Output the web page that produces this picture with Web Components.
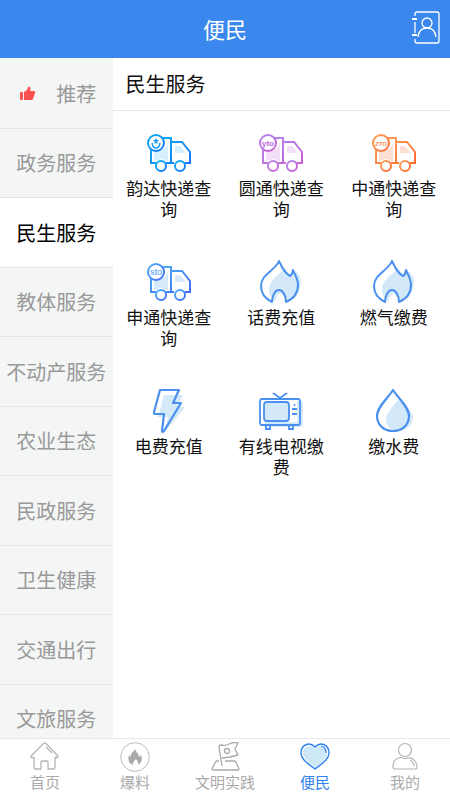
<!DOCTYPE html>
<html lang="zh-CN">
<head>
<meta charset="utf-8">
<meta name="viewport" content="width=device-width,initial-scale=1">
<title>便民</title>
<style>
html,body{margin:0;height:100%}
body{font-family:"Noto Sans CJK SC","Liberation Sans",sans-serif;font-weight:400;background:#fff;color:#111;overflow:hidden}
</style>
</head>
<body>
<service-app></service-app>
<script>
const truck = (id, a, b, pale, mark) => `
<defs><linearGradient id="${id}" x1="0" y1="0" x2="1" y2="1"><stop offset="0" stop-color="${a}"/><stop offset="1" stop-color="${b}"/></linearGradient></defs>
<path d="M8 17h6q7-1 8-8v19h-3q-4-4-9 0H8z" fill="${pale}"/><path d="M29 13h5l6 7H29z" fill="${pale}"/>
<g fill="none" stroke="url(#${id})" stroke-width="2"><path d="M10 30H5V5h20v25h-5M25 9h11l8 10v11h-5M25 30h3"/><circle cx="15" cy="33" r="5" fill="#fff"/><circle cx="34" cy="33" r="5" fill="#fff"/><circle cx="10" cy="10" r="8" fill="#fff"/></g>${mark}`;
const word = (t, c, s, size, w) => `<text x="10" y="13" font-size="${size}" font-weight="${w}" font-family="Liberation Sans, sans-serif" font-style="${s}" text-anchor="middle" fill="${c}">${t}</text>`;
const flame = `<path d="M27 6C20 14 11 18 11 28c0 5 3 9 6 12q4-17 12 0c10-3 14-12 14-20 0-6-3-9-7-12l-4 6z" fill="#d3e8f8"/>
<path d="M21-1C17 9 3 12 3 24c0 8 5 13 11 16 0-6 3-12 7-12s7 6 7 12c7-3 12-9 12-17 0-6-3-10-5-15-.5 3-1 5-3 6-6-3-8-9-11-15z" fill="none" stroke="#4a90ee" stroke-width="2" stroke-linejoin="round"/>`;
const ICONS = {
yunda: truck('g','#12b4f2','#1676fa','#d5f1fd','<path d="M6 10q1 5 4 5t4-5" fill="none" stroke="#189cf5" stroke-width="1.4"/><path d="M10 5l1 2h2l-2 2 1 2-2-1-2 1 1-2-2-2h2z" fill="#189cf5"/>'),
yto: truck('g','#b18aed','#cb5fd4','#f3dff8',word('yto','#b96bdf','normal',8,700)),
zto: truck('g','#fba660','#ff6a2e','#fde0d3',word('ZTO','#fb8b4c','italic',6,700)),
sto: truck('g','#4eb5f7','#4169f3','#d5e9fb',word('sto','#4499f4','normal',9,400)),
flame,
bolt: `<path d="M18 4h19l-6 12h8L19 41l3-15H12z" fill="#d3e8f8"/><path d="M14-1h19l-6 13h8L18 40q-2 2-2 0l2-17H9q-1 0-1-2z" fill="none" stroke="#4a90ee" stroke-width="2.2" stroke-linejoin="round"/>`,
tv: `<rect x="7" y="10" width="38" height="26" rx="2" fill="#d3e8f8"/><path d="M3 9h36v22H3z" fill="#fff"/><g fill="none" stroke="#4a90ee" stroke-width="1.8"><rect x="2" y="8" width="40" height="26" rx="2"/><rect x="6" y="11" width="25" height="19" rx="3" fill="#d3e8f8"/><path d="M15 2l7 5 7-5M8 34v4h4v-4M31 34v4h4v-4M34 18h5M34 23h5"/></g><circle cx="36.5" cy="14" r="1" fill="#4a90ee"/>`,
drop: `<path d="M27 9C21 17 15 22 15 29c0 6 6 11 12 11 8 0 15-6 15-14 0-5-7-12-15-17z" fill="#d3e8f8"/><path d="M22-1C17 7 6 16 6 25c0 9 7 15 16 15s16-6 16-15C38 16 27 7 22-1z" fill="none" stroke="#4a90ee" stroke-width="2.2" stroke-linejoin="round"/>`,
thumb: `<g fill="#f9514f"><rect x="0" y="6" width="3" height="8" rx="1"/><path d="M4 6l3-2 1-3q1-1 2 0 1 2 0 4h4q2 0 1 2l-2 6q0 1-2 1H4z"/></g>`,
contact: `<g fill="none" stroke="#fff" stroke-width="1.3"><path d="M3 5V3q0-2 2-2h20q2 0 2 2v27q0 2-2 2H5q-2 0-2-2v-2M3 11v11"/><path d="M0 8h5M0 24h5" stroke-width="2.2"/><circle cx="15" cy="12" r="5"/><path d="M6 26q1-9 9-9t9 9" /></g>`,
home: `<g fill="none" stroke="#b5b5b5" stroke-width="1.3" stroke-linejoin="round"><path d="M17 2.500Q15 0 13 2L2 13q-2 2 0 2.500h2V25q0 2 2 2h5v-7q0-1 1-1h5q1 0 1 1v7h5q2 0 2-2v-9.500h2q2-.5 0-2.500z"/><path d="M16 5l6 6"/></g>`,
fire: `<circle cx="15" cy="15" r="14.3" fill="none" stroke="#bcbcbc"/><path d="M15 7c1 4 4 4 4 8l2-2c2 5 0 8-3 10q1-3-2-6-4 3-3 6c-5-2-5-6-4-10l2 2c-1-4 3-5 4-8z" fill="#a9a9a9"/>`,
flag: `<g fill="none" stroke="#aaa" stroke-width="1.3" stroke-linejoin="round"><path d="M12 24L9 5q0-2 2-2 5 1 8-1t9-1l-3 6 3 6-8 2-8 1"/><circle cx="17" cy="9" r="2.5"/><path d="M9 19H7q-1 0-2 2l-3 6q0 1 1 1h25q1 0 1-1l-3-7q-1-1-2-1h-9"/></g>`,
heart: `<path d="M15 5C9-1 1 3 1 11c0 7 8 11 14 16 6-5 14-9 14-16C29 3 21-1 15 5z" fill="#fff" stroke="#2f83f0" stroke-width="1.4"/><path d="M15 8C10 2 4 6 4 11c0 6 7 9 11 13 5-4 11-7 11-13 0-5-6-9-11-3z" fill="#cde8f7" stroke="#cde8f7" stroke-width="2"/><path d="M21 4q5 1 5 7" fill="none" stroke="#2f83f0" stroke-width="1.2"/>`,
person: `<g fill="none" stroke="#b5b5b5" stroke-width="1.2"><circle cx="15" cy="8" r="6.5"/><path d="M8 16q3-1 5 0 2 1 5 0 4-1 7 3 2 3 2 6 0 2-2 2H5q-2 0-2-2 0-7 5-9zM20 18q4 2 4 6"/></g>`
};
function define(name, render){
  customElements.define(name, class extends HTMLElement{
    connectedCallback(){
      if(this.shadowRoot) return;
      this.attachShadow({mode:'open'}).innerHTML = render(this);
    }
  });
}
define('app-icon', el => `<style>:host{display:block}svg{display:block;overflow:visible;width:100%;height:100%}</style>
<svg viewBox="${el.getAttribute('box')}" aria-hidden="true">${ICONS[el.getAttribute('name')]}</svg>`);

define('top-bar', () => `<style>
:host{display:grid;grid-template-columns:1fr auto 1fr;align-items:center;box-sizing:border-box;height:58px;padding-bottom:3px;flex:none;background:#3a88ed;color:#fff}
h1{grid-column:2;margin:0;font-size:22px;line-height:32px;font-weight:400}
button{justify-self:end;margin:0 10px 0 0;padding:0;border:0;background:none;color:inherit}
app-icon{width:28px;height:34px}
</style><h1><slot></slot></h1><button type="button" aria-label="通讯录"><app-icon name="contact" box="0 0 28 34"></app-icon></button>`);

define('category-item', el => `<style>
:host{display:block;height:70px;box-sizing:border-box;border-bottom:1px solid #e4e6e6;background:#f4f6f6;color:#999}
:host(:nth-child(even)){height:69px}
:host([active]){background:#fff;color:#000}
button{display:flex;width:100%;height:100%;align-items:center;justify-content:center;gap:20px;padding:0;border:0;background:none;color:inherit;font:inherit;font-size:20px;line-height:28px;white-space:nowrap}
:host([icon]) button{padding-left:4px}
app-icon{width:16px;height:16px}
</style><button type="button" ${el.hasAttribute('active')?'aria-current="true"':''}>${el.hasAttribute('icon')?'<app-icon name="thumb" box="0 0 16 16"></app-icon>':''}<span><slot></slot></span></button>`);

define('category-list', () => `<style>:host{display:block;flex:0 0 25%;min-height:0;padding-top:1px;overflow:hidden;background:#f4f6f6}</style><slot></slot>`);

define('service-tile', el => `<style>
:host{display:block}
a{display:flex;flex-direction:column;align-items:center;padding:20px 12px 21px;color:#111;text-decoration:none;text-align:center;font-size:17px;line-height:21px}
app-icon{width:46px;height:46px}
</style><a href="#${el.getAttribute('icon')}"><app-icon name="${el.getAttribute('icon')}" box="0 -2 46 46"></app-icon><span><slot></slot></span></a>`);

define('service-panel', el => `<style>
:host{display:block;flex:1;min-width:0;background:#fff}
h2{margin:0;padding:0 13px;font-size:20px;line-height:52px;font-weight:400;border-bottom:1px solid #e6e6e6}
div{display:grid;grid-template-columns:repeat(3,1fr)}
</style><h2>${el.getAttribute('heading')}</h2><div><slot></slot></div>`);

define('tab-item', el => `<style>
:host{display:block;flex:1;color:#aaa}
:host([active]){color:#2f83f0}
a{display:flex;flex-direction:column;align-items:center;padding:3px 0 8px;color:inherit;text-decoration:none;font-size:15px;line-height:20px}
app-icon{width:30px;height:30px}
</style><a href="#${el.getAttribute('icon')}"><app-icon name="${el.getAttribute('icon')}" box="0 0 30 30"></app-icon><span><slot></slot></span></a>`);

define('tab-bar', () => `<style>:host{display:block;flex:none;border-top:1px solid #e8e8e8;background:#fff}nav{display:flex}</style><nav><slot></slot></nav>`);

define('service-app', () => `<style>
:host{display:flex;flex-direction:column;height:100vh}
main{display:flex;flex:1;min-height:0;overflow:hidden}
</style>
<top-bar>便民</top-bar>
<main>
<category-list>
<category-item icon>推荐</category-item><category-item>政务服务</category-item><category-item active>民生服务</category-item><category-item>教体服务</category-item><category-item>不动产服务</category-item><category-item>农业生态</category-item><category-item>民政服务</category-item><category-item>卫生健康</category-item><category-item>交通出行</category-item><category-item>文旅服务</category-item>
</category-list>
<service-panel heading="民生服务">
<service-tile icon="yunda">韵达快递查询</service-tile><service-tile icon="yto">圆通快递查询</service-tile><service-tile icon="zto">中通快递查询</service-tile>
<service-tile icon="sto">申通快递查询</service-tile><service-tile icon="flame">话费充值</service-tile><service-tile icon="flame">燃气缴费</service-tile>
<service-tile icon="bolt">电费充值</service-tile><service-tile icon="tv">有线电视缴费</service-tile><service-tile icon="drop">缴水费</service-tile>
</service-panel>
</main>
<tab-bar><tab-item icon="home">首页</tab-item><tab-item icon="fire">爆料</tab-item><tab-item icon="flag">文明实践</tab-item><tab-item icon="heart" active>便民</tab-item><tab-item icon="person">我的</tab-item></tab-bar>`);
</script>
</body>
</html>
